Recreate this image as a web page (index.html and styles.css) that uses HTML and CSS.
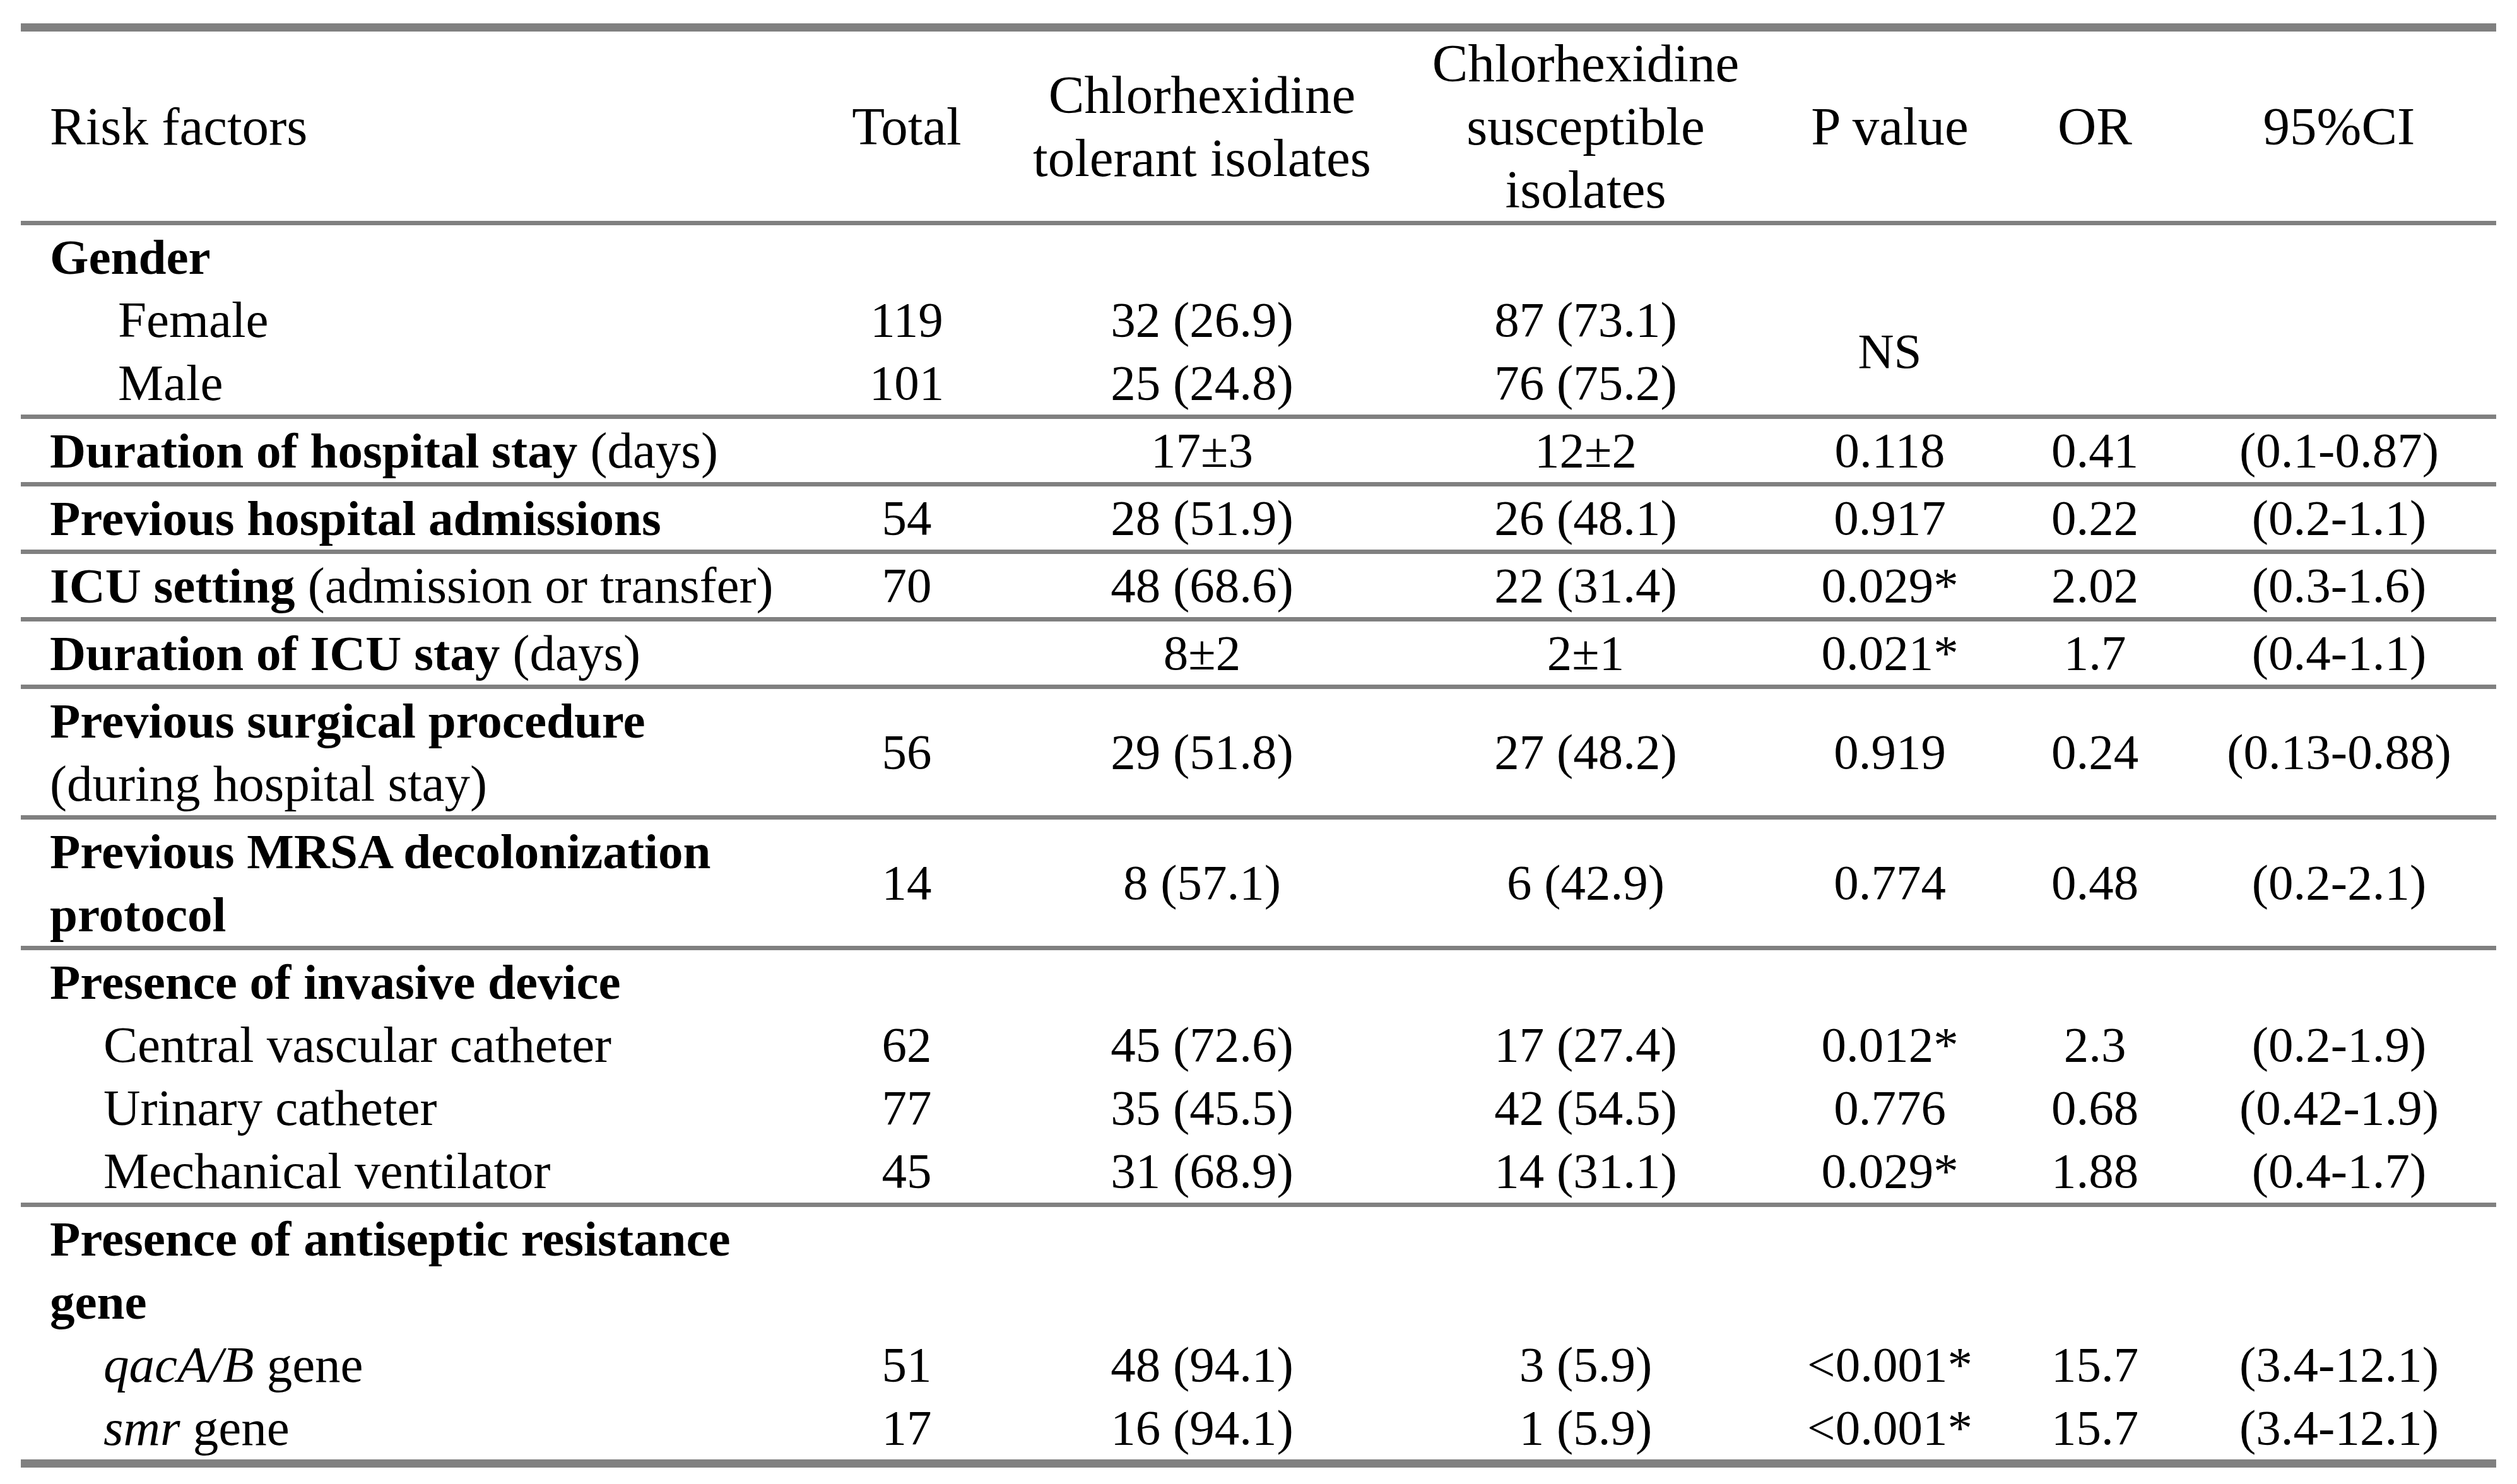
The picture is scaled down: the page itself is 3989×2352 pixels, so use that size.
FILE: index.html
```html
<!DOCTYPE html>
<html lang="en">
<head>
<meta charset="utf-8">
<title>Risk factors for chlorhexidine tolerance</title>
<link rel="stylesheet" href="styles.css">
</head>
<body>
<table class="risk">
  <colgroup>
    <col class="c-factor">
    <col class="c-total">
    <col class="c-tol">
    <col class="c-sus">
    <col class="c-p">
    <col class="c-or">
    <col class="c-ci">
  </colgroup>
  <thead>
    <tr>
      <th class="factor">Risk factors</th>
      <th>Total</th>
      <th>Chlorhexidine<br>tolerant isolates</th>
      <th>Chlorhexidine<br>susceptible<br>isolates</th>
      <th>P value</th>
      <th>OR</th>
      <th>95%CI</th>
    </tr>
  </thead>
  <tbody>
    <tr>
      <td class="factor"><b>Gender</b></td>
      <td></td><td></td><td></td><td></td><td></td><td></td>
    </tr>
    <tr>
      <td class="factor ind1">Female</td>
      <td>119</td><td>32 (26.9)</td><td>87 (73.1)</td>
      <td rowspan="2">NS</td><td></td><td></td>
    </tr>
    <tr>
      <td class="factor ind1">Male</td>
      <td>101</td><td>25 (24.8)</td><td>76 (75.2)</td>
      <td></td><td></td>
    </tr>
  </tbody>
  <tbody>
    <tr>
      <td class="factor"><b>Duration of hospital stay</b> (days)</td>
      <td></td><td>17±3</td><td>12±2</td><td>0.118</td><td>0.41</td><td>(0.1-0.87)</td>
    </tr>
  </tbody>
  <tbody>
    <tr>
      <td class="factor"><b>Previous hospital admissions</b></td>
      <td>54</td><td>28 (51.9)</td><td>26 (48.1)</td><td>0.917</td><td>0.22</td><td>(0.2-1.1)</td>
    </tr>
  </tbody>
  <tbody>
    <tr>
      <td class="factor"><b>ICU setting</b> (admission or transfer)</td>
      <td>70</td><td>48 (68.6)</td><td>22 (31.4)</td><td>0.029*</td><td>2.02</td><td>(0.3-1.6)</td>
    </tr>
  </tbody>
  <tbody>
    <tr>
      <td class="factor"><b>Duration of ICU stay</b> (days)</td>
      <td></td><td>8±2</td><td>2±1</td><td>0.021*</td><td>1.7</td><td>(0.4-1.1)</td>
    </tr>
  </tbody>
  <tbody>
    <tr>
      <td class="factor"><b>Previous surgical procedure</b><br>(during hospital stay)</td>
      <td>56</td><td>29 (51.8)</td><td>27 (48.2)</td><td>0.919</td><td>0.24</td><td>(0.13-0.88)</td>
    </tr>
  </tbody>
  <tbody>
    <tr>
      <td class="factor"><b>Previous MRSA decolonization<br>protocol</b></td>
      <td>14</td><td>8 (57.1)</td><td>6 (42.9)</td><td>0.774</td><td>0.48</td><td>(0.2-2.1)</td>
    </tr>
  </tbody>
  <tbody>
    <tr>
      <td class="factor"><b>Presence of invasive device</b></td>
      <td></td><td></td><td></td><td></td><td></td><td></td>
    </tr>
    <tr>
      <td class="factor ind2">Central vascular catheter</td>
      <td>62</td><td>45 (72.6)</td><td>17 (27.4)</td><td>0.012*</td><td>2.3</td><td>(0.2-1.9)</td>
    </tr>
    <tr>
      <td class="factor ind2">Urinary catheter</td>
      <td>77</td><td>35 (45.5)</td><td>42 (54.5)</td><td>0.776</td><td>0.68</td><td>(0.42-1.9)</td>
    </tr>
    <tr>
      <td class="factor ind2">Mechanical ventilator</td>
      <td>45</td><td>31 (68.9)</td><td>14 (31.1)</td><td>0.029*</td><td>1.88</td><td>(0.4-1.7)</td>
    </tr>
  </tbody>
  <tbody>
    <tr>
      <td class="factor"><b>Presence of antiseptic resistance<br>gene</b></td>
      <td></td><td></td><td></td><td></td><td></td><td></td>
    </tr>
    <tr>
      <td class="factor ind2"><i>qacA/B</i> gene</td>
      <td>51</td><td>48 (94.1)</td><td>3 (5.9)</td><td>&lt;0.001*</td><td>15.7</td><td>(3.4-12.1)</td>
    </tr>
    <tr>
      <td class="factor ind2"><i>smr</i> gene</td>
      <td>17</td><td>16 (94.1)</td><td>1 (5.9)</td><td>&lt;0.001*</td><td>15.7</td><td>(3.4-12.1)</td>
    </tr>
  </tbody>
</table>
</body>
</html>
```

FILE: styles.css
```css
html, body {
  margin: 0;
  background: #ffffff;
}

body {
  padding: 37px 0 0 33px;
  font-family: "Liberation Serif", "Times New Roman", serif;
  font-size: 79px;
  line-height: 100px;
  color: #000000;
}

.risk {
  width: 3923px;
  table-layout: fixed;
  border-collapse: separate;
  border-spacing: 0;
  border-top: 13px solid #808080;
  border-bottom: 13px solid #808080;
}

.c-factor { width: 1249px; }
.c-total  { width: 310px; }
.c-tol    { width: 626px; }
.c-sus    { width: 590px; }
.c-p      { width: 374px; }
.c-or     { width: 276px; }
.c-ci     { width: 498px; }

.risk th,
.risk td {
  padding: 0;
  font-weight: normal;
  text-align: center;
  vertical-align: middle;
  white-space: nowrap;
  line-height: 100px;
}

.risk thead th {
  font-size: 85px;
  border-bottom: 7px solid #808080;
}

.risk tbody + tbody > tr:first-child > td {
  border-top: 7px solid #808080;
}

.risk .factor {
  text-align: left;
  padding-left: 46px;
}

.risk tbody .factor {
  font-size: 81px;
}

.risk .factor.ind1 {
  padding-left: 154px;
}

.risk .factor.ind2 {
  padding-left: 131px;
}

.risk b {
  font-weight: bold;
  font-size: 79px;
  line-height: 80px;
}

.risk i {
  font-style: italic;
}
```
